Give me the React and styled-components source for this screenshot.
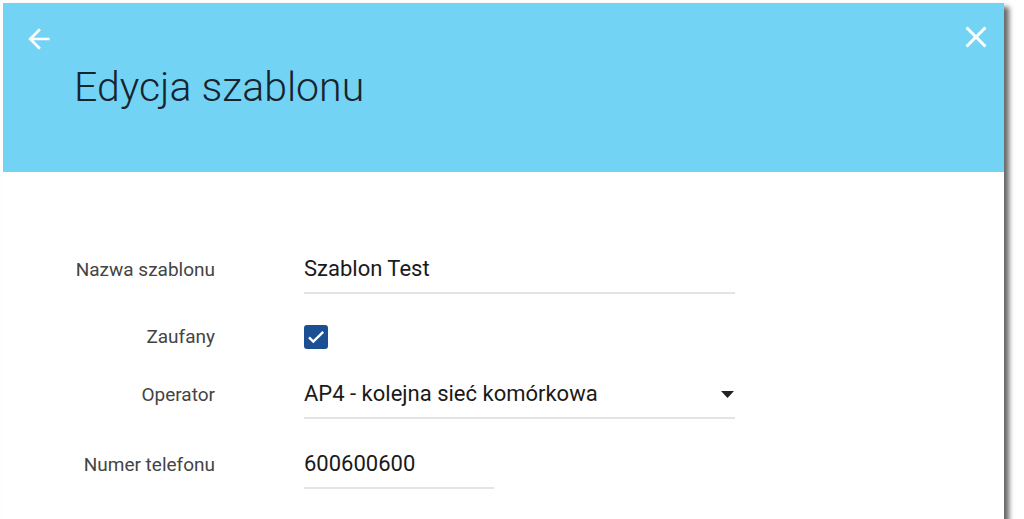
import styled, { createGlobalStyle } from 'styled-components'

const Global = createGlobalStyle`
  html, body {
    margin: 0;
    padding: 0;
    background: #fff;
    overflow: hidden;
  }
  body {
    font-family: Roboto, "Liberation Sans", sans-serif;
  }
`

const Page = styled.div`
  padding: 3px 0 0 3px;
  height: 519px;
  box-sizing: border-box;
`

const Panel = styled.div`
  width: 1001px;
  height: 530px;
  background: #fff;
  box-shadow: 5px 4px 5px rgba(0, 0, 0, 0.6);
  display: flex;
  flex-direction: column;
`

const Header = styled.div`
  height: 169px;
  background: #73d3f4;
  box-sizing: border-box;
  padding: 16px 10px 0 20px;
  display: flex;
  flex-direction: column;
`

const TopBar = styled.div`
  display: flex;
  justify-content: space-between;
  align-items: flex-start;
  height: 40px;
`

const IconButton = styled.button`
  border: none;
  background: transparent;
  padding: 0;
  margin-top: ${p => p.$offset || 0}px;
  color: #fff;
  cursor: pointer;
  display: flex;
  svg {
    display: block;
    fill: currentColor;
  }
`

const Title = styled.h1`
  margin: 4px 0 0 51px;
  font-size: 41px;
  line-height: 48px;
  font-weight: 300;
  color: #17232d;
`

const Body = styled.div`
  padding-top: 83px;
  display: flex;
  flex-direction: column;
  gap: 31px;
`

const Row = styled.div`
  display: grid;
  grid-template-columns: 212px 431px;
  column-gap: 89px;
  align-items: ${p => (p.$center ? 'center' : 'baseline')};
`

const Label = styled.label`
  text-align: right;
  font-size: 19px;
  line-height: 24px;
  color: #444;
`

const Field = styled.div`
  width: ${p => p.$width || 431}px;
  display: flex;
  align-items: center;
  justify-content: space-between;
  font-size: 22px;
  line-height: 28px;
  color: #1a1a1a;
  padding-bottom: 9px;
  border-bottom: 2px solid #e4e4e4;
`

const Caret = styled.svg`
  margin-right: 1px;
  fill: #222;
`

const Checkbox = styled.span`
  width: 24px;
  height: 24px;
  border-radius: 3px;
  background: #1b4e92;
  display: flex;
  align-items: center;
  justify-content: center;
  svg {
    fill: none;
    stroke: #fff;
    stroke-width: 2.4;
  }
`

export default function App() {
  return (
    <Page>
      <Global />
      <Panel>
        <Header>
          <TopBar>
            <IconButton $offset={4} aria-label="Wstecz">
              <svg width="32" height="32" viewBox="0 0 24 24">
                <path d="M20 11H7.83l5.59-5.59L12 4l-8 8 8 8 1.41-1.41L7.83 13H20v-2z" />
              </svg>
            </IconButton>
            <IconButton aria-label="Zamknij">
              <svg width="36" height="36" viewBox="0 0 24 24">
                <path d="M19 6.41L17.59 5 12 10.59 6.41 5 5 6.41 10.59 12 5 17.59 6.41 19 12 13.41 17.59 19 19 17.59 13.41 12z" />
              </svg>
            </IconButton>
          </TopBar>
          <Title>Edycja szablonu</Title>
        </Header>

        <Body>
          <Row>
            <Label>Nazwa szablonu</Label>
            <Field>Szablon Test</Field>
          </Row>
          <Row $center>
            <Label>Zaufany</Label>
            <Checkbox>
              <svg width="24" height="24" viewBox="0 0 24 24">
                <path d="M5 12.3l4.3 4.3L19.2 6.8" />
              </svg>
            </Checkbox>
          </Row>
          <Row>
            <Label>Operator</Label>
            <Field>
              AP4 - kolejna sieć komórkowa
              <Caret width="13" height="7" viewBox="0 0 13 7">
                <path d="M0 0h13L6.5 7z" />
              </Caret>
            </Field>
          </Row>
          <Row>
            <Label>Numer telefonu</Label>
            <Field $width={190}>600600600</Field>
          </Row>
        </Body>
      </Panel>
    </Page>
  )
}
